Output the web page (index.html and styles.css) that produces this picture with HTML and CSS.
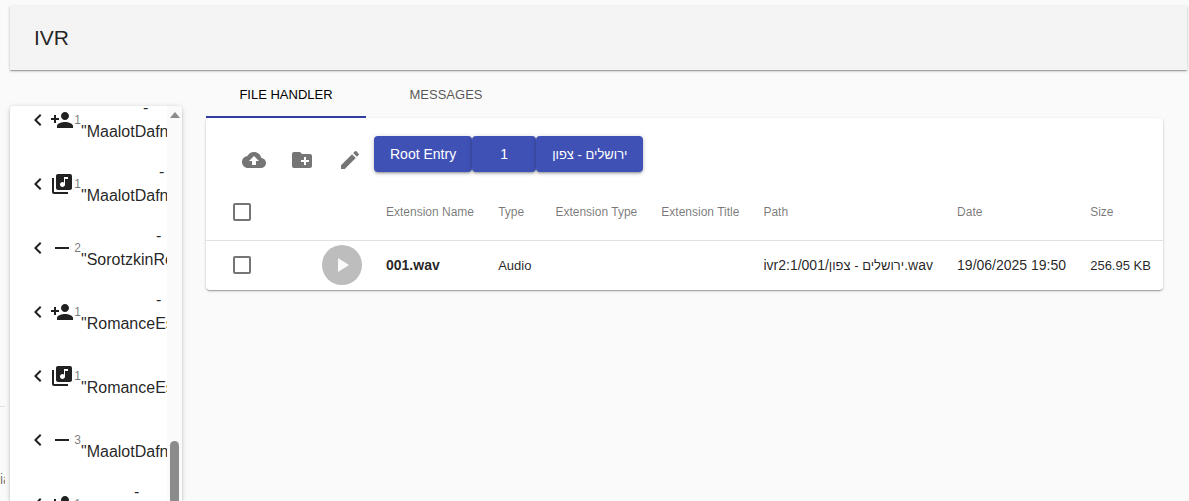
FILE: index.html
```
<!DOCTYPE html>
<html lang="en">
<head>
	<meta charset="UTF-8">
	<title>IVR</title>
	<meta name="viewport" content="width=device-width, initial-scale=1.0">
	<link rel="stylesheet" href="styles.css">
</head>
<body>
	<!-- shared icons -->
	<svg class="sprite" aria-hidden="true">
		<symbol id="arrow-left" viewBox="0 0 24 24"><path d="M15.41 16.09l-4.58-4.59 4.58-4.59L14 5.5l-6 6 6 6z" transform="translate(0 .5)"/></symbol>
		<symbol id="person-add" viewBox="0 0 24 24"><path d="M15 12c2.21 0 4-1.79 4-4s-1.79-4-4-4-4 1.79-4 4 1.79 4 4 4zm-9-2V7H4v3H1v2h3v3h2v-3h3v-2H6zm9 4c-2.67 0-8 1.34-8 4v2h16v-2c0-2.66-5.33-4-8-4z"/></symbol>
		<symbol id="library-music" viewBox="0 0 24 24"><path d="M20 2H8c-1.1 0-2 .9-2 2v12c0 1.1.9 2 2 2h12c1.1 0 2-.9 2-2V4c0-1.1-.9-2-2-2zm-2 5h-3v5.5c0 1.38-1.12 2.5-2.5 2.5S10 13.88 10 12.5s1.12-2.5 2.5-2.5c.57 0 1.08.19 1.5.51V5h4v2zM4 6H2v14c0 1.1.9 2 2 2h14v-2H4V6z"/></symbol>
		<symbol id="remove" viewBox="0 0 24 24"><path d="M19 13H5v-2h14v2z"/></symbol>
	</svg>

	<div class="behind">
		<span class="behind--text">ia</span>
	</div>

	<div class="page">
		<header class="header">
			<h1 class="header--title">IVR</h1>
		</header>

		<div class="content">
			<aside class="sidebar">
				<ul class="tree">
					<li class="tree--row">
						<svg class="icon"><use href="#arrow-left"/></svg>
						<svg class="icon"><use href="#person-add"/></svg>
						<span class="tree--digit">1</span>
						<span class="tree--name"><span class="tree--blank" style="width: 62px"></span>-<br>"MaalotDafna</span>
					</li>
					<li class="tree--row">
						<svg class="icon"><use href="#arrow-left"/></svg>
						<svg class="icon"><use href="#library-music"/></svg>
						<span class="tree--digit">1</span>
						<span class="tree--name"><span class="tree--blank" style="width: 78px"></span>-<br>"MaalotDafna</span>
					</li>
					<li class="tree--row">
						<svg class="icon"><use href="#arrow-left"/></svg>
						<svg class="icon"><use href="#remove"/></svg>
						<span class="tree--digit">2</span>
						<span class="tree--name"><span class="tree--blank" style="width: 75px"></span>-<br>"SorotzkinRe</span>
					</li>
					<li class="tree--row">
						<svg class="icon"><use href="#arrow-left"/></svg>
						<svg class="icon"><use href="#person-add"/></svg>
						<span class="tree--digit">1</span>
						<span class="tree--name"><span class="tree--blank" style="width: 75px"></span>-<br>"RomanceEs</span>
					</li>
					<li class="tree--row">
						<svg class="icon"><use href="#arrow-left"/></svg>
						<svg class="icon"><use href="#library-music"/></svg>
						<span class="tree--digit">1</span>
						<span class="tree--name"><br>"RomanceEs</span>
					</li>
					<li class="tree--row">
						<svg class="icon"><use href="#arrow-left"/></svg>
						<svg class="icon"><use href="#remove"/></svg>
						<span class="tree--digit">3</span>
						<span class="tree--name"><br>"MaalotDafna</span>
					</li>
					<li class="tree--row">
						<svg class="icon"><use href="#arrow-left"/></svg>
						<svg class="icon"><use href="#person-add"/></svg>
						<span class="tree--digit">1</span>
						<span class="tree--name"><span class="tree--blank" style="width: 53px"></span>-<br>&nbsp;</span>
					</li>
				</ul>
				<div class="scrollbar">
					<span class="scrollbar--arrow"></span>
					<span class="scrollbar--thumb"></span>
				</div>
			</aside>

			<main class="main">
				<div class="tabs" role="tablist">
					<button class="tab tab--selected" role="tab" aria-selected="true">File Handler</button>
					<button class="tab" role="tab" aria-selected="false">Messages</button>
				</div>

				<section class="paper">
					<div class="toolbar">
						<button class="iconButton" aria-label="Upload">
							<svg class="icon" viewBox="0 0 24 24"><path d="M19.35 10.04C18.67 6.59 15.64 4 12 4 9.11 4 6.6 5.64 5.35 8.04 2.34 8.36 0 10.91 0 14c0 3.31 2.69 6 6 6h13c2.76 0 5-2.24 5-5 0-2.64-2.05-4.78-4.65-4.96zM14 13v4h-4v-4H7l5-5 5 5h-3z"/></svg>
						</button>
						<button class="iconButton" aria-label="New folder">
							<svg class="icon" viewBox="0 0 24 24"><path d="M20 6h-8l-2-2H4c-1.11 0-1.99.89-1.99 2L2 18c0 1.11.89 2 2 2h16c1.11 0 2-.89 2-2V8c0-1.11-.89-2-2-2zm-1 8h-3v3h-2v-3h-3v-2h3V9h2v3h3v2z"/></svg>
						</button>
						<button class="iconButton" aria-label="Edit">
							<svg class="icon" viewBox="0 0 24 24"><path d="M3 17.25V21h3.75L17.81 9.94l-3.75-3.75L3 17.25zM20.71 7.04c.39-.39.39-1.02 0-1.41l-2.34-2.34c-.39-.39-1.02-.39-1.41 0l-1.83 1.83 3.75 3.75 1.83-1.83z"/></svg>
						</button>
						<nav class="crumbs">
							<button class="crumb">Root Entry</button>
							<button class="crumb">1</button>
							<button class="crumb"><span class="hebrew" lang="he">ירושלים - צפון</span></button>
						</nav>
					</div>

					<table class="files">
						<thead>
							<tr>
								<th class="files--check"><input type="checkbox" class="checkbox" aria-label="Select all"></th>
								<th class="files--play"></th>
								<th>Extension Name</th>
								<th>Type</th>
								<th>Extension Type</th>
								<th>Extension Title</th>
								<th>Path</th>
								<th>Date</th>
								<th>Size</th>
							</tr>
						</thead>
						<tbody>
							<tr>
								<td class="files--check"><input type="checkbox" class="checkbox" aria-label="Select 001.wav"></td>
								<td class="files--play">
									<button class="playButton" aria-label="Play">
										<svg class="icon" viewBox="0 0 24 24"><path d="M8 5v14l11-7z"/></svg>
									</button>
								</td>
								<td class="files--name">001.wav</td>
								<td class="files--small">Audio</td>
								<td></td>
								<td></td>
								<td>ivr2:1/001/<span class="hebrew" lang="he">ירושלים - צפון</span>.wav</td>
								<td>19/06/2025 19:50</td>
								<td class="files--small">256.95 KB</td>
							</tr>
						</tbody>
					</table>
				</section>
			</main>
		</div>
	</div>
</body>
</html>
```
FILE: styles.css
```
body {
	margin: 0;
	height: 100vh;
	overflow: hidden;
	background: #fafafa;
	color: rgba(0, 0, 0, 0.87);
	font-family: "Liberation Sans", Arial, sans-serif;
	font-size: 14px;
}

button {
	border: none;
	padding: 0;
	background: none;
	font-family: inherit;
	cursor: pointer;
}

.sprite {
	display: none;
}

.icon {
	display: block;
	flex: none;
	width: 24px;
	height: 24px;
	fill: currentColor;
}

.hebrew {
	font-size: 13px;
}

/* strip of the panel that lies under the page */
.behind {
	position: absolute;
	left: 0;
	bottom: 0;
	width: 5px;
	height: 94px;
	overflow: hidden;
	border-top: 1px solid #e0e0e0;
}

.behind--text {
	display: block;
	padding-top: 62px;
	line-height: 20px;
	color: rgba(0, 0, 0, 0.54);
}

.page {
	display: flex;
	flex-direction: column;
	box-sizing: border-box;
	height: 100%;
	padding: 6px 2px 0 10px;
}

.header {
	display: flex;
	align-items: center;
	flex: none;
	height: 64px;
	padding: 0 24px;
	background: #f4f4f4;
	box-shadow: 0 1px 3px rgba(0, 0, 0, 0.2), 0 1px 1px rgba(0, 0, 0, 0.14), 0 2px 1px -1px rgba(0, 0, 0, 0.12);
}

.header--title {
	margin: 0;
	font-size: 21px;
	font-weight: normal;
}

.content {
	display: flex;
	flex: 1;
	gap: 24px;
	min-height: 0;
	padding-right: 24px;
}

/* Sidebar */
.sidebar {
	display: flex;
	flex: none;
	width: 172px;
	margin-top: 36px;
	overflow: hidden;
	background: #fff;
	border-radius: 4px 4px 0 0;
	box-shadow: 0 1px 5px rgba(0, 0, 0, 0.2), 0 2px 2px rgba(0, 0, 0, 0.14), 0 3px 1px -2px rgba(0, 0, 0, 0.12);
}

.tree {
	flex: 1;
	min-width: 0;
	margin: -18px 0 0;
	padding: 0;
	overflow: hidden;
	list-style: none;
}

.tree--row {
	display: flex;
	align-items: center;
	height: 64px;
	padding-left: 16px;
}

.tree--digit {
	flex: none;
	width: 7px;
	text-align: right;
	font-size: 12px;
	color: rgba(0, 0, 0, 0.54);
}

.tree--name {
	font-size: 16px;
	line-height: 24px;
	white-space: nowrap;
}

.tree--blank {
	display: inline-block;
}

.scrollbar {
	display: flex;
	flex-direction: column;
	align-items: center;
	justify-content: space-between;
	width: 15px;
	background: #fafafa;
}

.scrollbar--arrow {
	margin-top: 6px;
	border: 5px solid transparent;
	border-top: none;
	border-bottom: 6px solid #8b8b8b;
}

.scrollbar--thumb {
	width: 9px;
	height: 60px;
	background: #8b8b8b;
	border-radius: 5px 5px 0 0;
}

/* Main */
.main {
	flex: 1;
	min-width: 0;
}

.tabs {
	display: flex;
}

.tab {
	box-sizing: border-box;
	width: 160px;
	height: 48px;
	border-top: 2px solid transparent;
	border-bottom: 2px solid transparent;
	font-size: 13px;
	text-transform: uppercase;
	color: rgba(0, 0, 0, 0.68);
}

.tab--selected {
	border-bottom-color: #303f9f;
	color: #000;
}

.paper {
	background: #fff;
	border-radius: 4px;
	box-shadow: 0 1px 3px rgba(0, 0, 0, 0.2), 0 1px 1px rgba(0, 0, 0, 0.14), 0 2px 1px -1px rgba(0, 0, 0, 0.12);
}

.toolbar {
	display: flex;
	align-items: flex-start;
	padding: 18px 24px 0;
}

.iconButton {
	display: flex;
	align-items: center;
	justify-content: center;
	width: 48px;
	height: 48px;
	color: rgba(0, 0, 0, 0.54);
}

.crumbs {
	display: flex;
}

.crumb {
	min-width: 64px;
	height: 36px;
	padding: 0 16px;
	border-radius: 4px;
	background: #3f51b5;
	color: #fff;
	font-size: 14px;
	box-shadow: 0 1px 5px rgba(0, 0, 0, 0.2), 0 2px 2px rgba(0, 0, 0, 0.14), 0 3px 1px -2px rgba(0, 0, 0, 0.12);
}

/* Table */
.files {
	width: 100%;
	border-collapse: separate;
	border-spacing: 0;
}

.files th,
.files td {
	padding: 0 12px;
	text-align: left;
	white-space: nowrap;
}

.files th {
	height: 56px;
	border-bottom: 1px solid #e0e0e0;
	font-size: 12px;
	font-weight: normal;
	color: rgba(0, 0, 0, 0.54);
}

.files td {
	height: 48px;
	border-bottom: 1px solid transparent;
}

.files .files--check {
	width: 53px;
	padding: 0 24px 0 27px;
}

.files .files--play {
	width: 40px;
}

.files .files--name {
	font-weight: bold;
}

.files .files--small {
	font-size: 13px;
}

.checkbox {
	display: block;
	appearance: none;
	width: 18px;
	height: 18px;
	margin: 0;
	border: 2px solid #757575;
	border-radius: 2px;
}

.playButton {
	display: flex;
	align-items: center;
	justify-content: center;
	width: 40px;
	height: 40px;
	border-radius: 50%;
	background: #bdbdbd;
	color: #fafafa;
}
```
